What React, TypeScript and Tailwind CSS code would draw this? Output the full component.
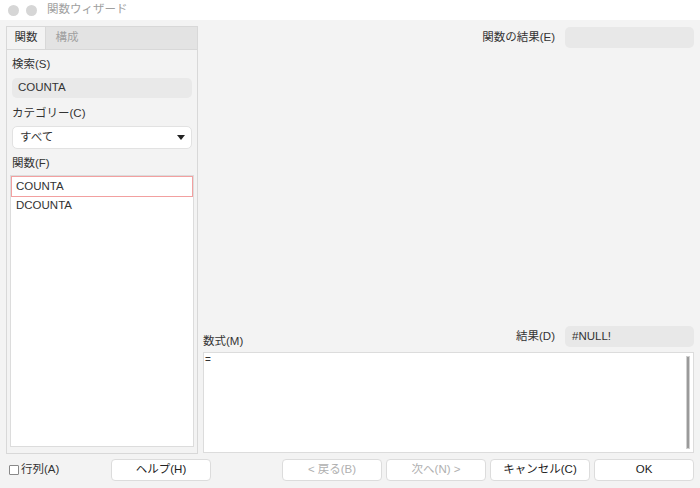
import React from "react";

const font = { fontFamily: '"Liberation Sans", "Noto Sans CJK JP", sans-serif' };

function Btn({ children, disabled, w = "w-[100px]" }: { children: React.ReactNode; disabled?: boolean; w?: string }) {
  return (
    <div
      className={`${w} h-[22px] flex items-center justify-center rounded-[4px] border border-[#dcdcdc] bg-white text-[11.5px] ${
        disabled ? "text-[#b0b0b0]" : "text-[#222]"
      }`}
    >
      {children}
    </div>
  );
}

export default function App() {
  return (
    <div className="w-[700px] h-[488px] bg-[#f3f3f3] flex flex-col text-[#333] overflow-hidden" style={font}>
      {/* title bar */}
      <div className="h-[20px] bg-white flex items-center pl-[8px] shrink-0">
        <div className="w-[11px] h-[11px] rounded-full bg-[#d6d6d6]" />
        <div className="w-[11px] h-[11px] rounded-full bg-[#d6d6d6] ml-[7px]" />
        <div className="ml-[10px] text-[11.5px] text-[#a0a0a0] leading-none">関数ウィザード</div>
      </div>

      <div className="flex-1 flex px-[6px] pt-[6px] gap-[5px] min-h-0">
        {/* left panel */}
        <div className="w-[192px] h-[428px] border border-[#d8d8d8] bg-[#f3f3f3] flex flex-col">
          <div className="h-[23px] bg-[#e3e3e3] flex border-b border-[#d8d8d8] shrink-0">
            <div className="w-[39px] bg-[#f3f3f3] flex items-center justify-center text-[11.5px] text-[#333] border-r border-[#d8d8d8]">関数</div>
            <div className="w-[42px] flex items-center justify-center text-[11.5px] text-[#a0a0a0]">構成</div>
          </div>
          <div className="flex-1 flex flex-col px-[5px] min-h-0">
            <div className="text-[11.5px] mt-[7px] leading-[14px]">検索(S)</div>
            <div className="mt-[7px] h-[20px] bg-[#e9e9e9] rounded-[5px] flex items-center pl-[6px] text-[11.5px]">COUNTA</div>
            <div className="text-[11.5px] mt-[8px] leading-[14px]">カテゴリー(C)</div>
            <div className="mt-[6px] h-[23px] bg-white rounded-[5px] border border-[#e2e2e2] flex items-center justify-between pl-[7px] pr-[6px] text-[11.5px]">
              <span>すべて</span>
              <svg width="8" height="5" viewBox="0 0 8 5"><path d="M0 0h8L4 5z" fill="#222" /></svg>
            </div>
            <div className="text-[11.5px] mt-[7px] leading-[14px]">関数(F)</div>
            <div className="mt-[5px] mb-[6px] -mx-[2px] flex-1 bg-white border border-[#dcdcdc] flex flex-col">
              <div className="h-[21px] border border-[#f2a0a0] flex items-center pl-[4px] text-[11.5px]">COUNTA</div>
              <div className="h-[18px] flex items-center pl-[5px] text-[11.5px]">DCOUNTA</div>
            </div>
          </div>
        </div>

        {/* right */}
        <div className="flex-1 flex flex-col">
          <div className="flex items-center justify-end gap-[10px] h-[21px] mt-[1px]">
            <span className="text-[11.5px]">関数の結果(E)</span>
            <div className="w-[129px] h-[21px] bg-[#e8e8e8] rounded-[5px]" />
          </div>
          <div className="flex-1" />
          <div className="flex items-end justify-between">
            <span className="text-[11.5px] leading-[14px] mb-[-1px]">数式(M)</span>
            <div className="flex items-center gap-[10px]">
              <span className="text-[11.5px]">結果(D)</span>
              <div className="w-[129px] h-[21px] bg-[#e8e8e8] rounded-[5px] flex items-center pl-[7px] text-[11.5px]">#NULL!</div>
            </div>
          </div>
          <div className="mt-[5px] h-[101px] bg-white border border-[#dcdcdc] relative">
            <div className="text-[10px] pl-[1px] pt-[1px] leading-[12px]">=</div>
            <div className="absolute right-[3px] top-[3px] bottom-[3px] w-[4px] border border-[#d0d0d0] bg-[#f6f6f6] flex justify-center">
              <div className="w-[2px] h-full bg-[#9a9a9a]" />
            </div>
          </div>
        </div>
      </div>

      {/* bottom */}
      <div className="h-[35px] shrink-0 flex items-center pl-[9px] pr-[6px] pb-[2px]">
        <div className="flex items-center w-[102px]">
          <div className="w-[10px] h-[10px] border border-[#888] bg-white rounded-[1px]" />
          <span className="text-[11.5px] ml-[2px]">行列(A)</span>
        </div>
        <Btn>ヘルプ(H)</Btn>
        <div className="flex-1" />
        <div className="flex gap-[4px]">
          <Btn disabled>&lt; 戻る(B)</Btn>
          <Btn disabled>次へ(N) &gt;</Btn>
          <Btn>キャンセル(C)</Btn>
          <Btn>OK</Btn>
        </div>
      </div>
    </div>
  );
}
